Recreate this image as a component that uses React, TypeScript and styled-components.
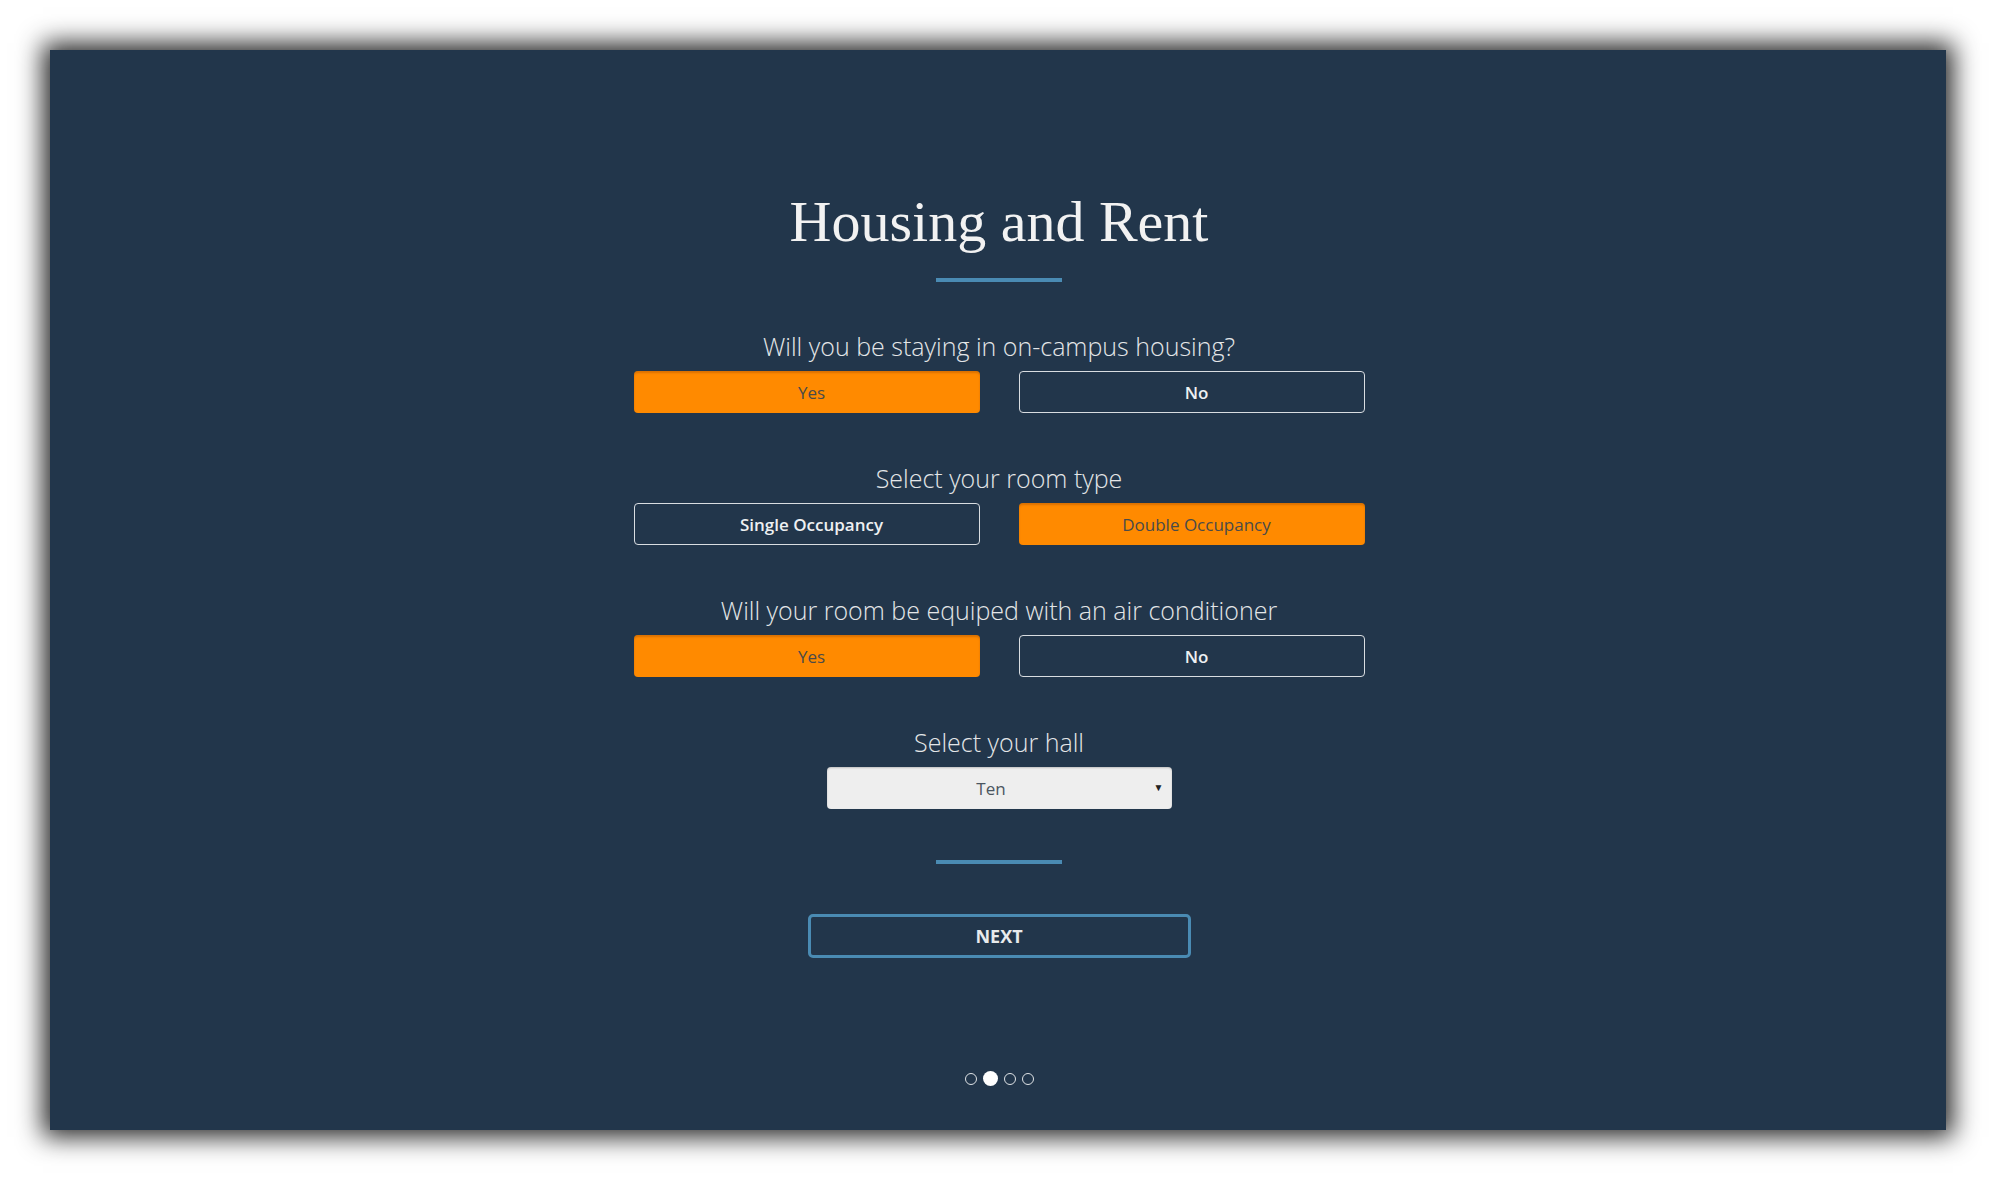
import { useState } from 'react';
import styled, { createGlobalStyle } from 'styled-components';

const GlobalStyle = createGlobalStyle`
  html, body {
    margin: 0;
    padding: 0;
    background: #ffffff;
  }
  body {
    font-family: "Open Sans", "Liberation Sans", sans-serif;
  }
`;

const Page = styled.div`
  width: 1996px;
  height: 1180px;
  padding: 50px;
  box-sizing: border-box;
`;

const Card = styled.main`
  width: 1896px;
  height: 1080px;
  background: #22364b;
  box-shadow: 0 0 24px 7px rgba(0, 0, 0, 0.85);
  display: flex;
  flex-direction: column;
  align-items: center;
  padding-top: 143px;
  padding-left: 2px;
  box-sizing: border-box;
`;

const Title = styled.h1`
  margin: 0;
  font-family: "Liberation Serif", "DejaVu Serif", serif;
  font-weight: 400;
  font-size: 58px;
  line-height: 58px;
  color: #f2f2f2;
`;

const Divider = styled.div<{ $gap: number }>`
  width: 126px;
  height: 4px;
  background: #4a8bb3;
  margin-top: ${(p) => p.$gap}px;
`;

const Section = styled.section<{ $top: number }>`
  display: flex;
  flex-direction: column;
  align-items: center;
  gap: 9px;
  margin-top: ${(p) => p.$top}px;
`;

const Question = styled.h2`
  margin: 0;
  font-size: 25px;
  line-height: 32px;
  font-weight: 300;
  color: #e4e6e8;
`;

const Choices = styled.div`
  display: grid;
  grid-template-columns: 346px 346px;
  column-gap: 39px;
`;

const Choice = styled.button<{ $on: boolean }>`
  height: 42px;
  border-radius: 4px;
  padding: 0 0 0 10px;
  font-family: "Open Sans", "Liberation Sans", sans-serif;
  font-size: 17px;
  cursor: pointer;
  box-sizing: border-box;
  ${(p) =>
    p.$on
      ? `
    background: #ff8a00;
    border: none;
    color: #4a4a4a;
    font-weight: 400;
    box-shadow: inset 0 2px 2px rgba(150, 70, 0, 0.35);
  `
      : `
    background: transparent;
    border: 1.5px solid #d9dde1;
    color: #eef0f2;
    font-weight: 600;
  `}
`;

const SelectWrap = styled.div`
  position: relative;
  width: 345px;
  height: 42px;
`;

const HallSelect = styled.select`
  width: 100%;
  height: 100%;
  appearance: none;
  border: none;
  border-radius: 4px;
  background: #eeeeee;
  color: #4a5560;
  font-family: "Open Sans", "Liberation Sans", sans-serif;
  font-size: 17px;
  text-align: center;
  text-align-last: center;
  padding: 0 16px 0 0;
  box-shadow: inset 0 1px 2px rgba(0, 0, 0, 0.2);
`;

const Caret = styled.span`
  position: absolute;
  right: 8px;
  top: 13px;
  font-size: 10px;
  color: #222;
  pointer-events: none;
`;

const NextButton = styled.button`
  margin-top: 50px;
  width: 383px;
  height: 44px;
  background: transparent;
  border: 3px solid #4a8bb3;
  border-radius: 5px;
  color: #e8eaec;
  font-family: "Open Sans", "Liberation Sans", sans-serif;
  font-weight: 700;
  font-size: 18px;
  cursor: pointer;
`;

const Dots = styled.nav`
  display: flex;
  align-items: center;
  gap: 6px;
  margin-top: 113px;
`;

const Dot = styled.span<{ $active: boolean }>`
  box-sizing: border-box;
  border-radius: 50%;
  width: ${(p) => (p.$active ? 15 : 12)}px;
  height: ${(p) => (p.$active ? 15 : 12)}px;
  background: ${(p) => (p.$active ? '#ffffff' : 'transparent')};
  border: ${(p) => (p.$active ? 'none' : '1.5px solid #dfe3e6')};
`;

type Q = { label: string; options: [string, string] };

const questions: Q[] = [
  { label: 'Will you be staying in on-campus housing?', options: ['Yes', 'No'] },
  { label: 'Select your room type', options: ['Single Occupancy', 'Double Occupancy'] },
  { label: 'Will your room be equiped with an air conditioner', options: ['Yes', 'No'] },
];

export default function App() {
  const [answers, setAnswers] = useState<number[]>([0, 1, 0]);
  const [hall, setHall] = useState('Ten');

  return (
    <>
      <GlobalStyle />
      <Page>
        <Card>
          <Title>Housing and Rent</Title>
          <Divider $gap={27} />
          {questions.map((q, qi) => (
            <Section key={q.label} $top={qi === 0 ? 48 : 49}>
              <Question>{q.label}</Question>
              <Choices>
                {q.options.map((o, oi) => (
                  <Choice
                    key={o}
                    $on={answers[qi] === oi}
                    onClick={() => setAnswers((a) => a.map((v, i) => (i === qi ? oi : v)))}
                  >
                    {o}
                  </Choice>
                ))}
              </Choices>
            </Section>
          ))}
          <Section $top={49}>
            <Question>Select your hall</Question>
            <SelectWrap>
              <HallSelect value={hall} onChange={(e) => setHall(e.target.value)}>
                {['One', 'Two', 'Three', 'Four', 'Five', 'Six', 'Seven', 'Eight', 'Nine', 'Ten'].map((h) => (
                  <option key={h}>{h}</option>
                ))}
              </HallSelect>
              <Caret>▼</Caret>
            </SelectWrap>
          </Section>
          <Divider $gap={51} />
          <NextButton>NEXT</NextButton>
          <Dots>
            {[0, 1, 2, 3].map((i) => (
              <Dot key={i} $active={i === 1} />
            ))}
          </Dots>
        </Card>
      </Page>
    </>
  );
}
